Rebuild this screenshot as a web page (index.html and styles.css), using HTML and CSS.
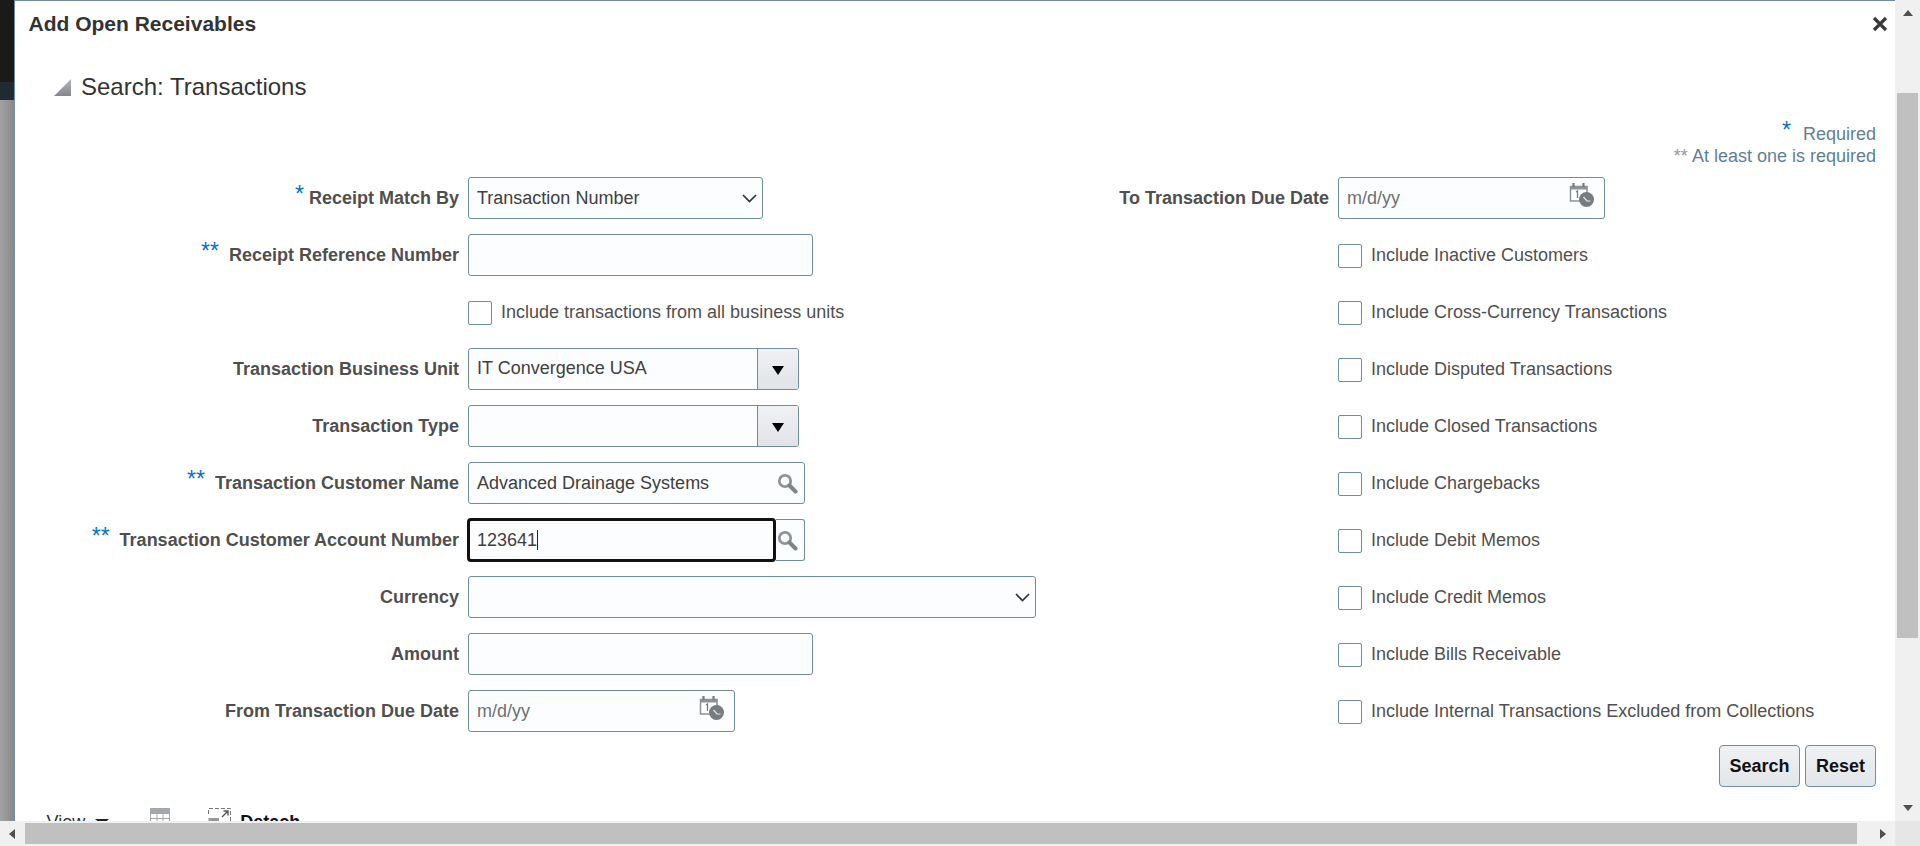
FILE: index.html
```html
<!DOCTYPE html>
<html lang="en">
<head>
<meta charset="utf-8">
<title>Add Open Receivables</title>
<link rel="stylesheet" href="styles.css">
</head>
<body>
<div class="viewport">
  <div class="stage">
    <div class="backdrop"><div class="bd-dark"></div><div class="bd-teal"></div><div class="bd-gray"></div></div>
    <main class="dialog">
      <header class="dialog-head">
        <h1 class="dialog-title">Add Open Receivables</h1>
        <svg class="close" viewBox="0 0 16 16" width="16" height="16"><path d="M2 2 14 14M14 2 2 14" stroke="#3a3a3a" stroke-width="3.2" fill="none"/></svg>
      </header>
      <div class="section-head">
        <svg class="disclosure" viewBox="0 0 17 17" width="17" height="17"><defs><linearGradient id="tri" x1="0" y1="0" x2="0" y2="1"><stop offset="0" stop-color="#b4b7ba"/><stop offset="1" stop-color="#85888c"/></linearGradient></defs><path d="M17 0V17H0Z" fill="url(#tri)"/></svg>
        <h2 class="section-title">Search: Transactions</h2>
      </div>
      <div class="legend">
        <div><span class="star legend-star">*</span><span class="legend-gap">Required</span></div>
        <div><span class="legend-dbl">**</span> At least one is required</div>
      </div>
      <div class="form">
        <div class="label"><span class="star">*</span>Receipt Match By</div>
        <div class="field w-295 select">Transaction Number<svg class="chev" viewBox="0 0 15 9" width="15" height="9"><path d="M1 1 7.500 7.500 14 1" stroke="#333" stroke-width="1.700" fill="none"/></svg></div>
        <div class="label">To Transaction Due Date</div>
        <div class="field w-267 date"><span class="ph">m/d/yy</span><svg class="cal" viewBox="0 0 26 26" width="26" height="26"><use href="#calclock"/></svg></div>

        <div class="label"><span class="star dbl">**</span>Receipt Reference Number</div>
        <div class="field w-345"></div>
        <div class="label"></div>
        <label class="check"><span class="box"></span>Include Inactive Customers</label>

        <div class="label"></div>
        <label class="check"><span class="box"></span>Include transactions from all business units</label>
        <div class="label"></div>
        <label class="check"><span class="box"></span>Include Cross-Currency Transactions</label>

        <div class="label">Transaction Business Unit</div>
        <div class="combo w-331"><div class="combo-text">IT Convergence USA</div><div class="combo-btn"><span class="tri"></span></div></div>
        <div class="label"></div>
        <label class="check"><span class="box"></span>Include Disputed Transactions</label>

        <div class="label">Transaction Type</div>
        <div class="combo w-331"><div class="combo-text"></div><div class="combo-btn"><span class="tri"></span></div></div>
        <div class="label"></div>
        <label class="check"><span class="box"></span>Include Closed Transactions</label>

        <div class="label"><span class="star dbl">**</span>Transaction Customer Name</div>
        <div class="field w-337 lov">Advanced Drainage Systems<svg class="mag" viewBox="0 0 21 21" width="21" height="21"><use href="#magnifier"/></svg></div>
        <div class="label"></div>
        <label class="check"><span class="box"></span>Include Chargebacks</label>

        <div class="label"><span class="star dbl">**</span>Transaction Customer Account Number</div>
        <div class="focus-lov w-337">
          <div class="focus-input">123641<span class="caret"></span></div>
          <div class="lov-btn"><svg class="mag" viewBox="0 0 21 21" width="21" height="21"><use href="#magnifier"/></svg></div>
        </div>
        <div class="label"></div>
        <label class="check"><span class="box"></span>Include Debit Memos</label>

        <div class="label">Currency</div>
        <div class="field w-568 select"><svg class="chev" viewBox="0 0 15 9" width="15" height="9"><path d="M1 1 7.500 7.500 14 1" stroke="#333" stroke-width="1.700" fill="none"/></svg></div>
        <div class="label"></div>
        <label class="check"><span class="box"></span>Include Credit Memos</label>

        <div class="label">Amount</div>
        <div class="field w-345"></div>
        <div class="label"></div>
        <label class="check"><span class="box"></span>Include Bills Receivable</label>

        <div class="label">From Transaction Due Date</div>
        <div class="field w-267 date"><span class="ph">m/d/yy</span><svg class="cal" viewBox="0 0 26 26" width="26" height="26"><use href="#calclock"/></svg></div>
        <div class="label"></div>
        <label class="check"><span class="box"></span>Include Internal Transactions Excluded from Collections</label>
      </div>
      <div class="actions">
        <button class="btn btn-search">Search</button>
        <button class="btn btn-reset">Reset</button>
      </div>
      <div class="toolbar">
        <span class="view">View</span><span class="view-tri"></span>
        <svg class="tb-table" viewBox="0 0 20 18" width="20" height="18"><path d="M.5 .5H19.500V17.500H.5ZM.5 5.500H19.500M.5 10.500H19.500M7 5.500V17.500M13 5.500V17.500" fill="none" stroke="#a4a8ac"/><path d="M0 0H20V5H0Z" fill="#a4a8ac"/></svg>
        <svg class="tb-detach" viewBox="0 0 23 18" width="23" height="18"><path d="M.5 6V.5H22.500V17.500H14M.5 .5" fill="none" stroke="#777" stroke-dasharray="4 2"/><path d="M.5 10V17.500H11V10Z" fill="#999"/><path d="M14 9 20 3M15.500 3H20V7.500" fill="none" stroke="#555" stroke-width="1.400"/></svg>
        <span class="detach">Detach</span>
      </div>
    </main>
  </div>
  <div class="vbar">
    <span class="arrow up"></span>
    <div class="vthumb"></div>
    <span class="arrow down"></span>
  </div>
  <div class="hbar">
    <span class="arrow left"></span>
    <div class="hthumb"></div>
    <span class="arrow right"></span>
  </div>
  <div class="corner"></div>
</div>
<svg class="defs" width="0" height="0">
  <symbol id="magnifier" viewBox="0 0 21 21">
    <circle cx="8" cy="8" r="5.700" fill="none" stroke="#8f9497" stroke-width="2.800"/>
    <path d="M12.500 12.500 18.500 18.500" stroke="#7f8487" stroke-width="4" stroke-linecap="round"/>
  </symbol>
  <symbol id="calclock" viewBox="0 0 26 26">
    <path d="M1.500 4.500H18V19H1.500Z" fill="#fff" stroke="#8d9296" stroke-width="1.500"/>
    <path d="M1 4H18.500V7.500H1Z" fill="#8d9296"/>
    <path d="M4.500 1V5M14.500 1V5" stroke="#777c80" stroke-width="2.200"/>
    <path d="M7 10 8.500 9V16" stroke="#777c80" stroke-width="1.300" fill="none"/>
    <circle cx="17.500" cy="17.500" r="7.500" fill="#777c81"/>
    <path d="M14.500 15 18 19 21.500 19" stroke="#e5e7e8" stroke-width="1.200" fill="none"/>
  </symbol>
</svg>
</body>
</html>
```

FILE: styles.css
```css
* { box-sizing: border-box; }
html, body { margin: 0; padding: 0; height: 100%; overflow: hidden; }
body { font-family: "Liberation Sans", Arial, sans-serif; font-size: 18px; color: #333; background: #fff; }

.viewport {
  width: 1920px;
  height: 846px;
  display: grid;
  grid-template-columns: 1895px 25px;
  grid-template-rows: 821px 25px;
}
.stage { display: flex; overflow: hidden; min-height: 0; }

.backdrop { width: 14px; flex: none; display: flex; flex-direction: column; }
.bd-dark { height: 82px; background: #1a1a18; }
.bd-teal { height: 18px; background: #1f2b30; }
.bd-gray { flex: 1; background: linear-gradient(90deg, #a2a2a2, #8a8a8a); }

.dialog {
  flex: 1;
  min-width: 0;
  border-top: 1px solid #6f8ca5;
  border-left: 1px solid #6f8ca5;
  background: #fff;
  overflow: hidden;
}
.dialog-head { height: 46px; display: flex; align-items: center; justify-content: space-between; padding: 0 7px 0 13.500px; }
.dialog-title { margin: 0; font-size: 21px; font-weight: 700; color: #333; line-height: 46px; }
.close { flex: none; }

.section-head { display: flex; align-items: center; height: 40px; margin-top: 20px; padding-left: 39px; gap: 10px; }
.disclosure { flex: none; }
.section-title { margin: 0; font-size: 24px; font-weight: 400; color: #333; }

.legend { margin-top: 16px; padding-right: 19px; text-align: right; color: #5f7f96; line-height: 22px; height: 44px; }
.legend-gap { margin-left: 7px; }
.legend-dbl { color: #999; }

.star { color: #0572ce; font-size: 23px; font-weight: 400; margin-right: 5px; line-height: 16px; position: relative; top: -2px; }
.star.dbl { margin-right: 10px; }

.form {
  margin-top: 10px;
  display: grid;
  grid-template-columns: 444px 552px 300px 1fr;
  grid-auto-rows: 42px;
  column-gap: 9px;
  row-gap: 15px;
  align-items: center;
}
.label { font-weight: 700; color: #4f4f4f; text-align: right; white-space: nowrap; }

.field {
  height: 42px;
  border: 1px solid #6f8ca0;
  border-radius: 3px;
  background: #fbfdff;
  padding: 0 8px;
  display: flex;
  align-items: center;
  justify-content: space-between;
  color: #404040;
  white-space: nowrap;
}
.w-295 { width: 295px; }
.w-267 { width: 267px; }
.w-345 { width: 345px; }
.w-331 { width: 331px; }
.w-337 { width: 337px; }
.w-568 { width: 568px; }
.select { padding-right: 5px; }
.select .chev { margin-left: auto; }
.date { padding-right: 9px; }
.ph { color: #6f6f6f; }
.cal { margin-top: -6px; }
.lov { padding-right: 6px; }

.combo { height: 42px; display: flex; border: 1px solid #6f8ca0; border-radius: 3px; overflow: hidden; background: #fbfdff; }
.combo-text { flex: 1; padding: 0 8px; line-height: 38px; color: #404040; }
.combo-btn { width: 41px; flex: none; border-left: 1px solid #6f8ca0; background: linear-gradient(#eff1f3, #e1e4e7); display: flex; align-items: center; justify-content: center; }
.tri { width: 0; height: 0; border-left: 6.500px solid transparent; border-right: 6.500px solid transparent; border-top: 9px solid #000; margin-top: 2px; }

.focus-lov { height: 42px; display: flex; }
.focus-input {
  width: 309px;
  height: 44px;
  flex: none;
  margin: -1px 0 0 -1px;
  border: 3px solid #111;
  border-radius: 4px;
  background: #fbfdff;
  padding-left: 7px;
  display: flex;
  align-items: center;
  color: #404040;
}
.caret { width: 1px; height: 20px; background: #222; }
.lov-btn {
  flex: 1;
  height: 42px;
  border: 1px solid #6f8ca0;
  border-left: 0;
  border-radius: 0 3px 3px 0;
  background: #fbfdff;
  display: flex;
  align-items: center;
  justify-content: flex-end;
  padding-right: 6px;
}

.check { display: flex; align-items: center; gap: 9px; color: #4f4f4f; white-space: nowrap; }
.box { width: 24px; height: 24px; flex: none; border: 1px solid #6f8ca0; border-radius: 2px; background: #fff; position: relative; top: 1px; }

.actions { margin-top: 13px; display: flex; justify-content: flex-end; gap: 5px; padding-right: 19px; }
.btn {
  height: 42px;
  border: 1px solid #6f8ca0;
  border-radius: 4px;
  background: linear-gradient(#eff1f3, #e3e6e9);
  font: 700 18px "Liberation Sans", Arial, sans-serif;
  color: #111;
  padding: 0;
}
.btn-search { width: 81px; }
.btn-reset { width: 71px; }

.toolbar { display: flex; align-items: flex-start; height: 40px; margin-top: 21px; padding-left: 31.500px; }
.view { color: #333; margin-top: 4px; }
.view-tri { width: 0; height: 0; border-left: 7px solid transparent; border-right: 7px solid transparent; border-top: 6px solid #222; margin: 11px 0 0 10px; }
.tb-table { margin: 0 0 0 41px; }
.tb-detach { margin: 0 0 0 38px; }
.detach { font-weight: 700; color: #111; margin: 4px 0 0 9px; }

.vbar { background: #f0f0f0; display: flex; flex-direction: column; align-items: center; }
.vthumb { width: 21px; height: 545px; margin-top: 77px; background: #c0c0c0; }
.hbar { background: #f0f0f0; display: flex; align-items: center; }
.hthumb { width: 1832px; height: 21px; margin-left: 10px; background: #c0c0c0; }
.corner { background: #e6e6e6; }

.arrow { width: 0; height: 0; flex: none; }
.arrow.up { border-left: 5.500px solid transparent; border-right: 5.500px solid transparent; border-bottom: 6px solid #505050; margin-top: 10px; }
.arrow.down { border-left: 5.500px solid transparent; border-right: 5.500px solid transparent; border-top: 6px solid #505050; margin-top: auto; margin-bottom: 10px; }
.arrow.left { border-top: 5.500px solid transparent; border-bottom: 5.500px solid transparent; border-right: 6px solid #505050; margin-left: 9px; }
.arrow.right { border-top: 5.500px solid transparent; border-bottom: 5.500px solid transparent; border-left: 6px solid #505050; margin-left: 23px; }

.defs { position: absolute; }
```
